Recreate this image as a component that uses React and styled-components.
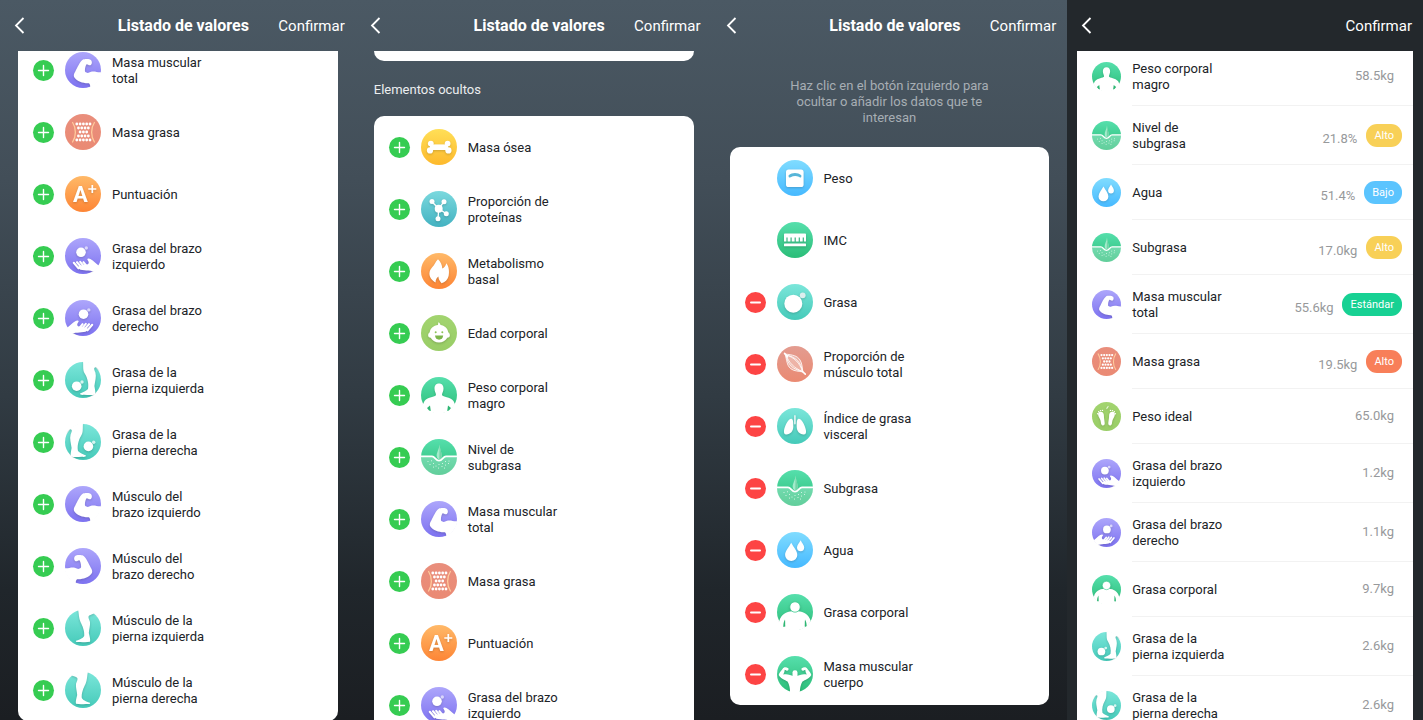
import React from 'react';
import styled, { createGlobalStyle } from 'styled-components';

const GlobalStyle = createGlobalStyle`
  * {
    box-sizing: border-box;
  }

  body {
    margin: 0;
    background: #23282c;
    font-family: Roboto, "Liberation Sans", sans-serif;
    -webkit-font-smoothing: antialiased;
  }

  ul, p, h2 {
    margin: 0;
    padding: 0;
    list-style: none;
  }

  button {
    border: 0;
    padding: 0;
    background: none;
    color: inherit;
    font: inherit;
    cursor: pointer;
  }
`;

const Screens = styled.main`
  display: grid;
  grid-template-columns: repeat(4, minmax(0, 1fr));
  height: 100vh;
  overflow: hidden;
`;

const Panel = styled.section`
  display: flex;
  flex-direction: column;
  min-height: 0;
  background: ${({ $plain }) => ($plain ? '#23282c' : 'linear-gradient(#4b5964 0%, #424e58 25%, #313b43 55%, #20262b 82%, #1b1e22 100%)')};
`;

const HeaderBlock = styled.header`
  display: grid;
  grid-template-columns: 1fr auto 1fr;
  align-items: center;
  flex: none;
  height: 51px;
  padding: 0 11px 0 22px;
  color: #fff;
`;

const BackButton = styled.button`
  display: flex;
  justify-self: start;
  padding: 8px;
  margin-left: -16px;
`;

const Title = styled.h2`
  font-size: 16px;
  font-weight: 700;
  line-height: 20px;
`;

const ConfirmButton = styled.button`
  grid-column: 3;
  justify-self: end;
  font-size: 15px;
  line-height: 20px;
`;

const ScrollArea = styled.div`
  flex: 1;
  min-height: 0;
  overflow: hidden;
  padding: 0 ${({ $wide }) => ($wide ? '10px' : '18px')};
`;

const Card = styled.ul`
  overflow: hidden;
  border-radius: ${({ $square }) => ($square ? '0' : '10px')};
  background: #fff;
  margin-top: ${({ $scrolled }) => ($scrolled ? `-${$scrolled}px` : '0')};
`;

const CardEnd = styled.div`
  height: 10px;
  border-radius: 0 0 10px 10px;
  background: #fff;
`;

const SectionLabel = styled.h2`
  padding: 21px 0 18px;
  color: #eceef0;
  font-size: 13px;
  font-weight: 400;
  line-height: 16px;
`;

const Hint = styled.p`
  max-width: 220px;
  margin: 0 auto;
  padding: 27px 0 21px;
  color: #a7aeb4;
  font-size: 13px;
  line-height: 16px;
  text-align: center;
`;

const EditRow = styled.li`
  display: flex;
  align-items: center;
  gap: 11px;
  height: 62px;
  padding: 0 15px;
`;

const ToggleSlot = styled.div`
  flex: none;
  width: 21px;
  height: 21px;
`;

const ToggleButton = styled.button`
  display: flex;
  border-radius: 50%;
  background: ${({ $remove }) => ($remove ? '#fd4444' : '#36cc52')};
`;

const Label = styled.span`
  width: 100px;
  padding-top: 2px;
  color: #202327;
  font-size: 13px;
  line-height: 16px;
`;

const IconCircle = styled.span`
  display: block;
  flex: none;
  width: ${({ $size }) => $size}px;
  height: ${({ $size }) => $size}px;
  border-radius: 50%;
  background: linear-gradient(${({ $from }) => $from}, ${({ $to }) => $to});

  svg {
    display: block;
    width: 100%;
    height: 100%;
    overflow: visible;
    clip-path: circle(52%);
  }

  .raised {
    filter: drop-shadow(0 1px 1px rgba(0, 0, 0, 0.18));
  }
`;

const ValueRow = styled.li`
  display: flex;
  align-items: center;
  gap: 11px;
  padding-left: 15px;
`;

const ValueBody = styled.div`
  display: flex;
  flex: 1;
  align-items: center;
  justify-content: space-between;
  min-height: 55px;
  padding: 12px ${({ $badge }) => ($badge ? '11px' : '19px')} 12px 0;
  border-bottom: 1px solid #f2f2f2;
`;

const Reading = styled.div`
  display: flex;
  align-items: flex-end;
  gap: 9px;
  color: #97999b;
  font-size: 13px;
  line-height: 16px;
`;

const Badge = styled.span`
  padding: 0 8px;
  border-radius: 11px;
  background: ${({ $color }) => $color};
  color: #fff;
  font-size: 11px;
  line-height: 23px;
`;

const LEG_FAT = 'M18 -1C18.5 5 17.5 8 20 12C22.5 16 24 22 23 27C21 29.5 17 30.5 15 31.5C15 33 17 33 19 32.8C23 33 27 33.4 30 32.6C31 30.5 29.8 27 29.4 24C30 19 31.6 15 30.4 10.5C29.4 8 28.4 6 30 5.4C32 5 33.5 6 35.5 9L37 -1Z';
const LEG_MUSCLE = 'M13 -1C14 4 13.8 8 15.5 12C17.5 16 19.8 21 19.2 26C17.5 29 13 29.8 10.8 31C10.8 32.3 13 32.2 15 32C19 32.3 22 32.4 25 31.8C25.8 29.5 24.4 26 23.8 23C24 19 25.4 16 25 12C24 9 22.6 7 24.2 5.6C26 4.5 28 4 30 3L27 -1Z';
const FLIP = 'translate(36 0) scale(-1 1)';

const Arm = () => (
    <path d="M18 7.5C20 6.8 25 6.6 26.3 8.5C27.5 10.5 26.6 13 25.3 13.2C23.5 13.5 22.6 11.8 21.6 12.2C20.6 13.5 19.6 17 20 19.5C21.5 21 23 21.2 24 20.6C25.5 19.6 28 19.2 30 19.6C32 20.3 34 20.4 38 20.6V38H25C25.6 34 25.2 32.2 23.8 31.2C19 31.6 12 29.5 9.4 25.5C8.2 23.5 9 21.5 10.3 19.4C12.5 15.5 14.5 10 18 7.5Z"/>
);

const Hand = () => (
    <>
        <path d="M12 29.5C15 27.4 19 27 22 26.6C24.5 26 24 23.8 22.4 21.8C22 20.3 24.2 20 25.8 21.2C28.5 23 30.5 24.8 33 27L37 29V36L31 34.6C27 32 20 33 15.5 31.8Z"/>
        <path d="M8.8 24.8L13.5 30.3M12 24.2L16.4 29.2M15.2 23.9L19 28.6M18.4 24.2L21.5 28" fill="none" stroke="#fff" strokeWidth="2.1" strokeLinecap="round"/>
    </>
);

const Subfat = () => (
    <>
        <path d="M0 17.5H11C14 17.5 14.5 22 18 22C21.5 22 22 17.5 25 17.5H36V36H0Z" fill="#fff" opacity="0.26"/>
        <path d="M18.6 5.5C18.2 10 15.4 14 15.7 17C16 19.4 17 20.2 18.3 20.2C19.8 20.2 20.8 19 20.7 16.6C20.6 13 18.8 10 18.6 5.5Z" fill="#a3ebcb"/>
        <path d="M18.6 5.5C18.8 10 20.6 13 20.7 16.6C20.8 19 19.8 20.2 18.3 20.2Z" fill="#73d3a6"/>
        <path d="M0 17.3H11C14 17.3 14.5 21.6 18 21.6C21.5 21.6 22 17.3 25 17.3H36" fill="none" stroke="#fff" strokeWidth="1.7"/>
        <path d="M7 22.5h0M10.5 21.8h0M9 25.5h0M12.5 24.5h0M15 27h0M12.5 28h0M18 25.5h0M17.5 29h0M21 27.5h0M21.5 24.5h0M24.5 26h0M24.5 22.5h0M27.5 24.5h0M28 22h0M23.5 29h0" stroke="#e4f9ee" strokeWidth="1.1" strokeLinecap="round"/>
    </>
);

const FAT_DOTS = [
    [10, 5],
    [14, 4],
    [18, 3],
    [22, 4],
    [26, 5],
];

const glyphs = {
    scale: (
        <g className="raised">
            <rect x="9" y="9.6" width="17.6" height="17.4" rx="2.6"/>
            <path d="M11.6 15.2C15.5 12.2 20.5 12.2 24.3 15.2V17C23.3 18 22.8 17.5 21.8 16.8C19.3 15.5 16.5 15.6 13.6 17.2C12.3 18 11.7 17.5 11.6 16.8Z" fill="#57b5d8"/>
        </g>
    ),
    ruler: (
        <g className="raised">
            <path d="M7.8 11.6H28.2Q29 11.6 29 12.4V19.5H26.9V15.5H25.7V19.5H22.9V15.5H21.7V19.5H18.8V15.5H17.6V19.5H14.7V15.5H13.5V19.5H10.6V15.5H9.4V19.5H7V12.4Q7 11.6 7.8 11.6Z"/>
            <rect x="7" y="21.5" width="22" height="2.8" rx="0.6"/>
        </g>
    ),
    fat: (
        <g className="raised">
            <circle cx="16.3" cy="19.7" r="9"/>
            <circle cx="25.7" cy="11.3" r="2.9" fill="#dceeee"/>
        </g>
    ),
    muscle: (
        <g fill="none" stroke="#fff" strokeLinecap="round">
            <path d="M7.5 7.3L10.5 10.8M25.5 25.5L28.3 28.2" strokeWidth="1.6"/>
            <path d="M8 8C16 9 20 9.5 23 14C25.5 18 25 22 26 26C22 25 17 25.5 13.5 22.5C9.5 19 10 14 8 8Z" fill="#fff" fillOpacity="0.3" strokeWidth="0.8"/>
            <path d="M9 9C17 11 23 17 25.5 25.5M9 9C12 17 17 22 25.5 25.5M9 9C19 11 24 16 25.5 25.5M9 9C11 19 15 23 25.5 25.5" strokeWidth="0.8"/>
        </g>
    ),
    lungs: (
        <g className="raised">
            <rect x="17" y="7" width="1.8" height="9.5" rx="0.9" fill="#d7f1ee"/>
            <path d="M14.5 10.7C16.5 11.5 16.3 15 16.3 18.5C16.3 23.5 13.5 26 9.5 26.5C7.3 26.7 6.8 25 7 22.8C7.4 18.5 11 10.5 14.5 10.7Z"/>
            <path d="M21.5 10.7C19.5 11.5 19.7 15 19.7 18.5C19.7 23.5 22.5 26 26.5 26.5C28.7 26.7 29.2 25 29 22.8C28.6 18.5 25 10.5 21.5 10.7Z"/>
        </g>
    ),
    subfat: <Subfat/>,
    water: (
        <g className="raised">
            <path d="M14.2 10.7C16.5 15 20.3 18.8 20.3 22.9A6.1 6.1 0 0 1 8.1 22.9C8.1 18.8 12 15 14.2 10.7Z"/>
            <path d="M23.6 8.2C24.9 10.8 27.2 13 27.2 15.6A3.6 3.6 0 0 1 20 15.6C20 13 22.3 10.8 23.6 8.2Z"/>
        </g>
    ),
    bodyFat: (
        <g className="raised">
            <path d="M18 17.5C25 16 31.5 20 33.4 26L37 38H-1L2.6 26C4.5 20 11 16 18 17.5Z"/>
            <circle cx="18" cy="13" r="5.2" stroke="#3fcd92" strokeWidth="0.8"/>
            <path d="M8 25.5C6.6 28 6.3 30 6.3 33L8.3 32.5C8.1 30 8.3 28 8 25.5ZM28 25.5C29.4 28 29.7 30 29.7 33L27.7 32.5C27.9 30 27.7 28 28 25.5Z" fill="#2eb673"/>
        </g>
    ),
    strongBody: (
        <g className="raised">
            <path d="M11.5 12.5C9 10.4 6.5 11 5.5 13C4 15 2 17 1.7 19C3.5 22.5 8 24 10.5 25.5C12.5 29 13 32 13.2 38H22.8C23 32 23.5 29 25.5 25.5C28 24 32.5 22.5 34.3 19C34 17 32 15 30.5 13C29.5 11 27 10.4 24.5 12.5C24 14 25.5 15.5 27 14.2L28.3 13.8C28.5 16 29 17.2 29.8 18.5C26 17.5 22 19 20 20H16C14 19 10 17.5 6.2 18.5C7 17.2 7.5 16 7.7 13.8L9 14.2C10.5 15.5 12 14 11.5 12.5Z"/>
            <rect x="15.5" y="14.3" width="5" height="8" rx="2.2"/>
        </g>
    ),
    bone: (
        <g className="raised">
            <rect x="9" y="15.4" width="18" height="5.6"/>
            <circle cx="9.8" cy="14.6" r="2.9"/>
            <circle cx="9" cy="21.4" r="3.1"/>
            <circle cx="26.6" cy="14.6" r="2.9"/>
            <circle cx="27.4" cy="21.4" r="3.1"/>
        </g>
    ),
    protein: (
        <g className="raised">
            <path d="M11 10.7L17.7 17.7L23 10.7M25.3 22.8L17.7 17.7L17 27.7" fill="none" stroke="#fff" strokeWidth="1.3"/>
            <circle cx="17.7" cy="17.7" r="4"/>
            <circle cx="11" cy="10.6" r="2.5"/>
            <circle cx="23" cy="10.7" r="2.5"/>
            <circle cx="25.3" cy="22.8" r="2.5"/>
            <circle cx="17" cy="27.7" r="2.5"/>
        </g>
    ),
    flame: (
        <g className="raised">
            <path d="M17 6.2C19.6 8.7 21.2 12 21.3 15.5C23.2 14.5 24.8 12.8 25.3 10.2C27.8 13 28.6 18.5 27.6 23C26.8 26.8 24 29.3 20.5 30.2C18.7 28 17.4 26 17.4 23.5C16 24.8 14.4 26.5 14.6 29.5C11 27.5 8.4 24.5 8.4 20.5C8.5 17.5 10 16 11.2 14.3C13.6 12 14.2 9 17 6.2Z"/>
        </g>
    ),
    baby: (
        <>
            <path className="raised" d="M17.3 7.2C18.5 7.8 19.5 9 19.5 10C23.5 10.5 26.5 13 27.3 17.2C29.5 18.8 29.6 22.5 26.3 22.7C24.5 25.8 21.5 27.4 18 27.4C14.5 27.4 11.5 25.8 9.7 22.7C6.4 22.5 6.5 18.8 8.7 17.2C9.5 13 12.5 10.5 17 10Z"/>
            <g fill="#8cc458">
                <circle cx="14.7" cy="17.3" r="1"/>
                <circle cx="21.3" cy="17.3" r="1"/>
                <path d="M14 20.6H22.2C22 23.5 20.3 24.7 18.1 24.7S14.2 23.5 14 20.6Z" fill="#7cb54a"/>
            </g>
        </>
    ),
    leanBody: (
        <g className="raised">
            <path d="M18 6.5C21.2 6.5 22.5 8.8 22.5 11.5C22.5 14.5 21.2 15.5 21 18C22 20.2 29 19.5 32.5 24C33.5 26 34 28 36 30L37 38H-1L0 30C2 28 2.5 26 3.5 24C7 19.5 14 20.2 15 18C14.8 15.5 13.5 14.5 13.5 11.5C13.5 8.8 14.8 6.5 18 6.5Z"/>
            <path d="M6 31L9 28.5L9.8 34L8 33.6ZM30 31L27 28.5L26.2 34L28 33.6Z" fill="#2eb673"/>
        </g>
    ),
    arm: <g className="raised"><Arm/></g>,
    armRight: <g className="raised"><g transform={FLIP}><Arm/></g></g>,
    fatMass: (
        <>
            {FAT_DOTS.map(([y, count]) => (
                Array.from({ length: count }, (_, i) => (
                    <circle key={`${y}-${i}`} cx={18.4 + (i - (count - 1) / 2) * 3.3} cy={y} r="1.4"/>
                ))
            ))}
            <path d="M7.6 8.5C11.3 14 11.3 22.5 7.6 28M29.4 8.5C25.7 14 25.7 22.5 29.4 28" fill="none" stroke="#ffcb9c" strokeWidth="1.3" strokeLinecap="round"/>
        </>
    ),
    score: (
        <g className="raised">
            <text x="8" y="25.5" fontFamily="Roboto, sans-serif" fontSize="22" fontWeight="700">A</text>
            <path d="M27.3 9V17M23.3 13H31.3" stroke="#fff" strokeWidth="1.7"/>
        </g>
    ),
    armFat: (
        <g className="raised">
            <circle cx="16" cy="14.3" r="4.8"/>
            <circle cx="21.3" cy="10" r="1.7" fill="#d9d6fb"/>
            <Hand/>
        </g>
    ),
    armFatRight: (
        <g className="raised">
            <circle cx="18.5" cy="14.2" r="4.8"/>
            <circle cx="23.8" cy="9.9" r="1.7" fill="#d9d6fb"/>
            <g transform={FLIP}><Hand/></g>
        </g>
    ),
    legFat: (
        <g className="raised">
            <circle cx="11.7" cy="24.2" r="4.8"/>
            <circle cx="17" cy="20" r="1.7" fill="#d5f5f0"/>
            <path d={LEG_FAT}/>
        </g>
    ),
    legFatRight: (
        <g className="raised">
            <circle cx="23.4" cy="22.4" r="4.8"/>
            <circle cx="28.7" cy="18.2" r="1.7" fill="#d5f5f0"/>
            <g transform={FLIP}><path d={LEG_FAT}/></g>
        </g>
    ),
    leg: <g className="raised"><path d={LEG_MUSCLE}/></g>,
    legRight: <g className="raised"><g transform={FLIP}><path d={LEG_MUSCLE}/></g></g>,
    feet: (
        <g className="raised">
            <path d="M9 12.5C12.5 11 15 13.5 14.8 17C14.7 20 15.8 24 15.8 26.5C15.8 30 12 30 11.3 27C10.8 24 10.7 22 9 19.5C7.2 17 7 13.5 9 12.5Z"/>
            <path d="M27 12.5C23.5 11 21 13.5 21.2 17C21.3 20 20.2 24 20.2 26.5C20.2 30 24 30 24.7 27C25.2 24 25.3 22 27 19.5C28.8 17 29 13.5 27 12.5Z"/>
            <path d="M7 14.5h0M8.3 12h0M10.5 10.7h0M13 10.4h0M29 14.5h0M27.7 12h0M25.5 10.7h0M23 10.4h0" stroke="#fff" strokeWidth="1.8" strokeLinecap="round"/>
            <path d="M17.7 9C17.8 6.8 18.8 5 20.8 4.5C20.5 6.5 19.5 8 17.7 9Z" fill="#e9f6dc"/>
        </g>
    ),
};

const tones = {
    blue: ['#80dcff', '#46b9ff'],
    green: ['#56dfac', '#2bbd78'],
    teal: ['#7be6da', '#45cab9'],
    coral: ['#e39c90', '#ea8a72'],
    salmon: ['#e98e7c', '#ea8a74'],
    purple: ['#ada6fb', '#7d72f0'],
    orange: ['#ffb968', '#fd8535'],
    yellow: ['#ffdf57', '#fdb92c'],
    cyan: ['#7bd9de', '#43b2c1'],
    lime: ['#a2d46f', '#99cd66'],
};

const metrics = {
    peso: ['Peso', 'scale', 'blue'],
    imc: ['IMC', 'ruler', 'green'],
    grasa: ['Grasa', 'fat', 'teal'],
    musculoTotal: ['Proporción de músculo total', 'muscle', 'coral'],
    visceral: ['Índice de grasa visceral', 'lungs', 'teal'],
    subgrasa: ['Subgrasa', 'subfat', 'green'],
    nivelSubgrasa: ['Nivel de subgrasa', 'subfat', 'green'],
    agua: ['Agua', 'water', 'blue'],
    grasaCorporal: ['Grasa corporal', 'bodyFat', 'green'],
    masaCuerpo: ['Masa muscular cuerpo', 'strongBody', 'green'],
    osea: ['Masa ósea', 'bone', 'yellow'],
    proteinas: ['Proporción de proteínas', 'protein', 'cyan'],
    metabolismo: ['Metabolismo basal', 'flame', 'orange'],
    edad: ['Edad corporal', 'baby', 'lime'],
    magro: ['Peso corporal magro', 'leanBody', 'green'],
    masaMuscular: ['Masa muscular total', 'arm', 'purple'],
    masaGrasa: ['Masa grasa', 'fatMass', 'salmon'],
    puntuacion: ['Puntuación', 'score', 'orange'],
    ideal: ['Peso ideal', 'feet', 'lime'],
    grasaBrazoIzq: ['Grasa del brazo izquierdo', 'armFat', 'purple'],
    grasaBrazoDer: ['Grasa del brazo derecho', 'armFatRight', 'purple'],
    grasaPiernaIzq: ['Grasa de la pierna izquierda', 'legFat', 'teal'],
    grasaPiernaDer: ['Grasa de la pierna derecha', 'legFatRight', 'teal'],
    musculoBrazoIzq: ['Músculo del brazo izquierdo', 'arm', 'purple'],
    musculoBrazoDer: ['Músculo del brazo derecho', 'armRight', 'purple'],
    musculoPiernaIzq: ['Músculo de la pierna izquierda', 'leg', 'teal'],
    musculoPiernaDer: ['Músculo de la pierna derecha', 'legRight', 'teal'],
};

const hiddenEnd = [
    'masaMuscular', 'masaGrasa', 'puntuacion', 'grasaBrazoIzq', 'grasaBrazoDer', 'grasaPiernaIzq',
    'grasaPiernaDer', 'musculoBrazoIzq', 'musculoBrazoDer', 'musculoPiernaIzq', 'musculoPiernaDer',
];

const hiddenStart = [
    'osea', 'proteinas', 'metabolismo', 'edad', 'magro', 'nivelSubgrasa',
    'masaMuscular', 'masaGrasa', 'puntuacion', 'grasaBrazoIzq',
];

const fixed = ['peso', 'imc'];
const visible = ['grasa', 'musculoTotal', 'visceral', 'subgrasa', 'agua', 'grasaCorporal', 'masaCuerpo'];

const readings = [
    { id: 'magro', value: '58.5kg' },
    { id: 'nivelSubgrasa', value: '21.8%', badge: 'Alto', color: '#f8d057' },
    { id: 'agua', value: '51.4%', badge: 'Bajo', color: '#5bc4fe' },
    { id: 'subgrasa', value: '17.0kg', badge: 'Alto', color: '#f8d057' },
    { id: 'masaMuscular', value: '55.6kg', badge: 'Estándar', color: '#17d193' },
    { id: 'masaGrasa', value: '19.5kg', badge: 'Alto', color: '#f87f59' },
    { id: 'ideal', value: '65.0kg' },
    { id: 'grasaBrazoIzq', value: '1.2kg' },
    { id: 'grasaBrazoDer', value: '1.1kg' },
    { id: 'grasaCorporal', value: '9.7kg' },
    { id: 'grasaPiernaIzq', value: '2.6kg' },
    { id: 'grasaPiernaDer', value: '2.6kg' },
];

const MetricIcon = ({ id, size = 36 }) => {
    const [, glyph, tone] = metrics[id];
    const [from, to] = tones[tone];
    return (
        <IconCircle $size={size} $from={from} $to={to}>
            <svg viewBox="0 0 36 36" fill="#fff" aria-hidden="true">{glyphs[glyph]}</svg>
        </IconCircle>
    );
};

const Header = ({ title }) => (
    <HeaderBlock>
        <BackButton type="button" aria-label="Atrás">
            <svg width="11" height="17" viewBox="0 0 11 17" fill="none" stroke="#fff" strokeWidth="1.8">
                <path d="M9.5 1L2 8.5L9.5 16"/>
            </svg>
        </BackButton>
        {title && <Title>{title}</Title>}
        <ConfirmButton type="button">Confirmar</ConfirmButton>
    </HeaderBlock>
);

const Editable = ({ id, action }) => (
    <EditRow>
        <ToggleSlot>
            {action && (
                <ToggleButton type="button" $remove={action === 'remove'} aria-label={metrics[id][0]}>
                    <svg width="21" height="21" viewBox="0 0 21 21" stroke="#fff" strokeWidth={action === 'remove' ? 2 : 1.4} strokeLinecap="round">
                        <path d={action === 'remove' ? 'M6 10.5H15' : 'M5.5 10.5H15.5M10.5 5.5V15.5'}/>
                    </svg>
                </ToggleButton>
            )}
        </ToggleSlot>
        <MetricIcon id={id}/>
        <Label>{metrics[id][0]}</Label>
    </EditRow>
);

const App = () => {
    return (
        <>
            <GlobalStyle/>
            <Screens>
                <Panel>
                    <Header title="Listado de valores"/>
                    <ScrollArea>
                        <Card $scrolled={12}>
                            {hiddenEnd.map((id) => <Editable key={id} id={id} action="add"/>)}
                        </Card>
                    </ScrollArea>
                </Panel>
                <Panel>
                    <Header title="Listado de valores"/>
                    <ScrollArea>
                        <CardEnd/>
                        <SectionLabel>Elementos ocultos</SectionLabel>
                        <Card>
                            {hiddenStart.map((id) => <Editable key={id} id={id} action="add"/>)}
                        </Card>
                    </ScrollArea>
                </Panel>
                <Panel>
                    <Header title="Listado de valores"/>
                    <ScrollArea>
                        <Hint>Haz clic en el botón izquierdo para ocultar o añadir los datos que te interesan</Hint>
                        <Card>
                            {fixed.map((id) => <Editable key={id} id={id}/>)}
                            {visible.map((id) => <Editable key={id} id={id} action="remove"/>)}
                        </Card>
                    </ScrollArea>
                </Panel>
                <Panel $plain>
                    <Header/>
                    <ScrollArea $wide>
                        <Card $square $scrolled={4}>
                            {readings.map(({ id, value, badge, color }) => (
                                <ValueRow key={id}>
                                    <MetricIcon id={id} size={29}/>
                                    <ValueBody $badge={badge}>
                                        <Label>{metrics[id][0]}</Label>
                                        <Reading>
                                            <span>{value}</span>
                                            {badge && <Badge $color={color}>{badge}</Badge>}
                                        </Reading>
                                    </ValueBody>
                                </ValueRow>
                            ))}
                        </Card>
                    </ScrollArea>
                </Panel>
            </Screens>
        </>
    );
};

export default App;
